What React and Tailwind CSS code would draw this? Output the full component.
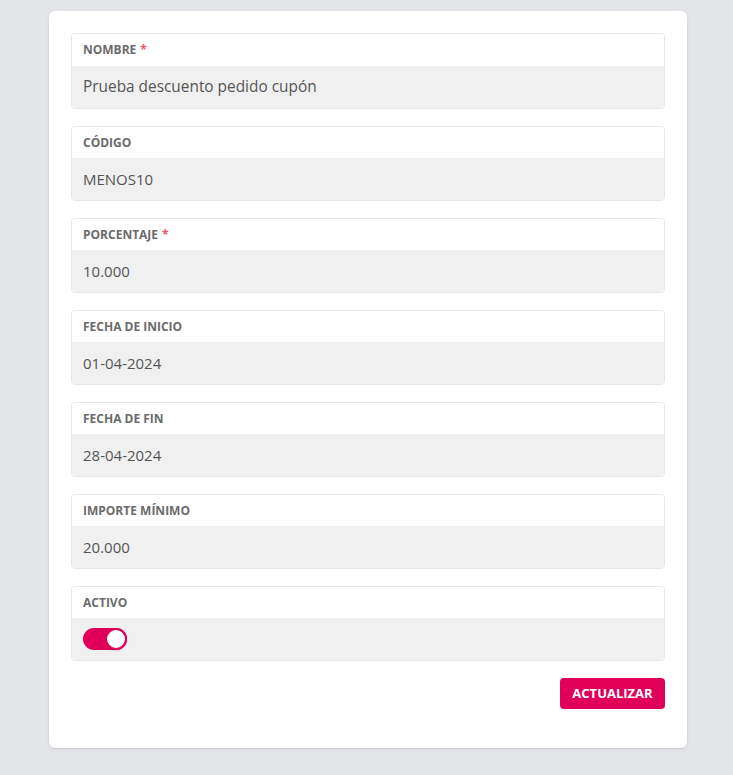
import React, { useState } from 'react';

const fields = [
  { label: 'Nombre', required: true, value: 'Prueba descuento pedido cupón', big: true },
  { label: 'Código', value: 'MENOS10' },
  { label: 'Porcentaje', required: true, value: '10.000' },
  { label: 'Fecha de inicio', value: '01-04-2024' },
  { label: 'Fecha de fin', value: '28-04-2024' },
  { label: 'Importe mínimo', value: '20.000' },
];

const Field = ({ label, required, big, children }) => (
  <div className="rounded border border-[#e6e6e6] overflow-hidden">
    <div className={`${big ? 'h-[32px]' : 'h-[31px]'} flex items-center px-[11px] bg-white text-[12px] font-bold uppercase text-[#6b6b6b]`}>
      {label}
      {required && <span className="ml-1 text-[#f0506e]">*</span>}
    </div>
    <div className={`h-[42px] flex items-center px-[11px] bg-[#f0f0f0] ${big ? 'text-[15.4px]' : 'text-[15px]'} text-[#555]`}>
      {children}
    </div>
  </div>
);

const App = () => {
  const [active, setActive] = useState(true);

  return (
    <div className="min-h-screen bg-[#e4e5e9] pt-[11px] pb-[27px] px-[49px] font-['Open_Sans',sans-serif]">
      <div className="w-[638px] bg-white rounded-md shadow-sm px-[22px] pt-[22px] pb-[39px]">
        <div className="flex flex-col gap-[17px]">
          {fields.map(f => (
            <Field key={f.label} label={f.label} required={f.required} big={f.big}>
              {f.value}
            </Field>
          ))}
          <Field label="Activo">
            <button
              onClick={() => setActive(!active)}
              className={`w-[44px] h-[22px] rounded-full flex items-center ${active ? 'bg-[#e0005a] justify-end' : 'bg-[#ccc] justify-start'}`}
            >
              <span className="w-[22px] h-[22px] rounded-full bg-white border-2 border-[#e0005a] shadow" />
            </button>
          </Field>
        </div>
        <div className="flex justify-end mt-[17px]">
          <button className="h-[31px] w-[105px] rounded bg-[#e0005a] text-white text-[13px] font-bold uppercase">
            Actualizar
          </button>
        </div>
      </div>
    </div>
  );
};

export default App;
